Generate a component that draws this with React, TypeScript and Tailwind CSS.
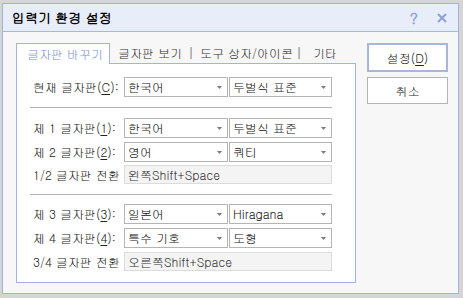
import React from "react";

const FONT = "font-['Gulim','Noto_Sans_CJK_KR','Noto_Sans',sans-serif]";

function Arrow() {
  return (
    <svg width="5" height="3" viewBox="0 0 5 3" className="shrink-0">
      <path d="M0 0H5L2.5 3Z" fill="#7a7a7a" />
    </svg>
  );
}

function Sel({ text, w }: { text: string; w: string }) {
  return (
    <div
      className={`${w} h-[20px] border border-[#b4b4b4] bg-white flex items-center pl-[3px] pr-[5px] text-[12px] leading-none text-[#111]`}
    >
      <span className="flex-1 whitespace-nowrap">{text}</span>
      <Arrow />
    </div>
  );
}

function Label({ pre, u, post }: { pre: string; u: string; post: string }) {
  return (
    <div className="w-[91px] shrink-0 text-[12px] leading-none text-[#222] whitespace-nowrap">
      {pre}
      <span className="underline underline-offset-2">{u}</span>
      {post}
    </div>
  );
}

function Row({
  pre,
  u,
  post,
  a,
  b,
  cls = "",
}: {
  pre: string;
  u: string;
  post: string;
  a: string;
  b: string;
  cls?: string;
}) {
  return (
    <div className={`flex items-center pl-[3px] ${cls}`}>
      <Label pre={pre} u={u} post={post} />
      <div className="flex gap-[1px]">
        <Sel text={a} w="w-[104px]" />
        <Sel text={b} w="w-[103px]" />
      </div>
    </div>
  );
}

function InputRow({ label, value, cls = "" }: { label: string; value: string; cls?: string }) {
  return (
    <div className={`flex items-center pl-[3px] ${cls}`}>
      <div className="w-[91px] shrink-0 text-[12px] leading-none text-[#222] whitespace-nowrap">
        {label}
      </div>
      <div className="w-[208px] h-[19px] border border-[#dcdcdc] bg-[#f4f4f4] flex items-center pl-[3px] text-[12px] leading-none text-[#333] whitespace-nowrap">
        {value}
      </div>
    </div>
  );
}

export default function App() {
  return (
    <div className={`w-[463px] h-[298px] bg-[#d5d5d5] pt-[3px] pl-[2px] ${FONT}`}>
      <div className="w-[457px] h-[291px] border border-[#a3b2da] flex flex-col bg-[#f7f7f7]">
        {/* Title bar */}
        <div className="h-[28px] shrink-0 bg-[#e7edf9] border-b border-[#a8b7dc] flex items-center pl-[9px] pr-[11px]">
          <span className="text-[13px] font-bold text-black leading-none flex-1">입력기 환경 설정</span>
          <span className="text-[15px] font-bold text-[#8e9fd4] leading-none mr-[19px]">?</span>
          <svg width="10" height="10" viewBox="0 0 10 10">
            <path d="M1 1L9 9M9 1L1 9" stroke="#8e9fd4" strokeWidth="2" />
          </svg>
        </div>
        {/* Content */}
        <div className="flex pt-[11px] pl-[13px]">
          <div className="w-[340px] flex flex-col">
            {/* Tabs */}
            <div className="h-[20px] flex items-start">
              <div className="relative z-10 h-[21px] w-[94px] border-t border-x border-[#a3b3dd] bg-white flex items-center pl-[10px] text-[12px] leading-none text-[#7d93d2] whitespace-nowrap">
                글자판 바꾸기
              </div>
              <div className="ml-[8px] h-[20px] flex items-center text-[12px] leading-none text-[#333] whitespace-nowrap">
                글자판 보기
                <span className="mx-[6px] text-[#555]">|</span>
                도구 상자/아이콘
                <span className="ml-[3px] mr-[11px] text-[#555]">|</span>
                기타
              </div>
            </div>
            {/* Panel */}
            <div className="h-[220px] border border-[#a3b3dd] bg-white pt-[13px] pl-[13px] pr-[23px]">
              <Row pre="현재 글자판(" u="C" post="):" a="한국어" b="두벌식 표준" />
              <div className="mt-[10px] h-px bg-[#b4b4b4]" />
              <Row cls="mt-[10px]" pre="제 1 글자판(" u="1" post="):" a="한국어" b="두벌식 표준" />
              <Row cls="mt-[4px]" pre="제 2 글자판(" u="2" post="):" a="영어" b="쿼티" />
              <InputRow cls="mt-[3px]" label="1/2 글자판 전환" value="왼쪽Shift+Space" />
              <div className="mt-[10px] h-px bg-[#b4b4b4]" />
              <Row cls="mt-[9px]" pre="제 3 글자판(" u="3" post="):" a="일본어" b="Hiragana" />
              <Row cls="mt-[4px]" pre="제 4 글자판(" u="4" post="):" a="특수 기호" b="도형" />
              <InputRow cls="mt-[4px]" label="3/4 글자판 전환" value="오른쪽Shift+Space" />
            </div>
          </div>
          {/* Buttons */}
          <div className="ml-[11px] w-[81px] flex flex-col">
            <button className="h-[29px] border-2 border-[#a9b6dc] bg-white text-[12px] leading-none text-[#222]">
              설정(<span className="underline underline-offset-2">D</span>)
            </button>
            <button className="mt-[5px] h-[27px] border border-[#b4b4b4] bg-white text-[12px] leading-none text-[#222]">
              취소
            </button>
          </div>
        </div>
      </div>
    </div>
  );
}
